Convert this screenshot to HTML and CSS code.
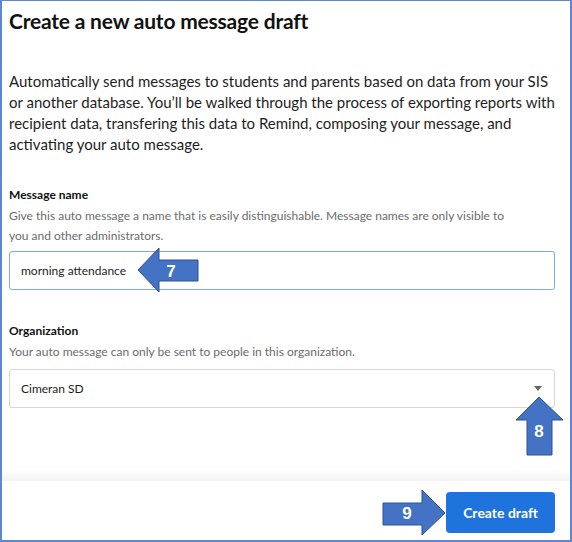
FILE: index.html
```html
<!DOCTYPE html>
<html>
<head>
<meta charset="utf-8">
<link rel="stylesheet" href="styles.css">
</head>
<body>
<div class="frame">
  <div class="content">
    <h1 class="title">Create a new auto message draft</h1>
    <p class="intro">Automatically send messages to students and parents based on data from your SIS or another database. You’ll be walked through the process of exporting reports with recipient data, transfering this data to Remind, composing your message, and activating your auto message.</p>
    <div class="field field-name">
      <div class="label">Message name</div>
      <div class="help">Give this auto message a name that is easily distinguishable. Message names are only visible to you and other administrators.</div>
      <div class="input focused">morning attendance</div>
    </div>
    <div class="field field-org">
      <div class="label">Organization</div>
      <div class="help">Your auto message can only be sent to people in this organization.</div>
      <div class="input select">
        <span>Cimeran SD</span>
        <span class="caret"></span>
      </div>
    </div>
  </div>
  <div class="footer-shadow"></div>
  <div class="footer">
    <button class="btn-primary">Create draft</button>
  </div>
  <svg class="annotations" width="572" height="542" viewBox="0 0 572 542">
    <polygon points="138,270 159,248 159,260 198,260 198,281 159,281 159,292" class="arrow"/>
    <text x="171" y="277" class="num">7</text>
    <polygon points="539,397 563,420 552,420 552,455 527,455 527,420 516,420" class="arrow"/>
    <text x="539" y="437" class="num">8</text>
    <polygon points="383,503 422,503 422,490 445,513 422,535 422,525 383,525" class="arrow"/>
    <text x="407" y="519" class="num">9</text>
  </svg>
</div>
</body>
</html>
```
FILE: styles.css
```css
html, body {
  margin: 0;
  padding: 0;
  background: #ffffff;
}
.frame {
  position: relative;
  width: 572px;
  height: 542px;
  box-sizing: border-box;
  border: 2px solid #5b87d3;
  border-top-width: 1px;
  display: flex;
  flex-direction: column;
  font-family: Lato, "Noto Sans", sans-serif;
  color: #1e1e1e;
  overflow: hidden;
}
.content {
  flex: 1;
  padding: 6px 15px 0 7px;
}
.title {
  margin: 0;
  font-size: 21px;
  font-weight: 700;
  letter-spacing: -0.2px;
  line-height: 28px;
  color: #111;
}
.intro {
  margin: 36px 0 0 0;
  font-size: 15px;
  line-height: 21px;
  color: #1e1e1e;
}
.field-name {
  margin-top: 30px;
}
.field-org {
  margin-top: 31px;
}
.label {
  font-size: 12px;
  font-weight: 700;
  line-height: 20px;
  color: #111;
}
.help {
  margin-top: 1px;
  max-width: 500px;
  font-size: 12px;
  line-height: 20px;
  color: #6b6b6b;
}
.input {
  margin-top: 5px;
  height: 39px;
  box-sizing: border-box;
  border: 1px solid #d6d6d6;
  border-radius: 3px;
  padding: 0 11px;
  display: flex;
  align-items: center;
  font-size: 12px;
  color: #1e1e1e;
}
.input.focused {
  border-color: #7fa9e6;
}
.select {
  margin-top: 7px;
  justify-content: space-between;
  padding-right: 12px;
}
.caret {
  width: 0;
  height: 0;
  border-left: 4px solid transparent;
  border-right: 4px solid transparent;
  border-top: 5px solid #666;
}
.footer-shadow {
  height: 11px;
  background: linear-gradient(to bottom, rgba(240,240,240,0), #f3f3f3);
}
.footer {
  height: 59px;
  box-sizing: border-box;
  padding: 11px 15px 0 0;
  display: flex;
  justify-content: flex-end;
  align-items: flex-start;
}
.btn-primary {
  width: 109px;
  height: 41px;
  border: none;
  border-radius: 4px;
  background: #1f73dc;
  color: #ffffff;
  font-family: Lato, "Noto Sans", sans-serif;
  font-size: 14px;
  font-weight: 700;
}
.annotations {
  position: absolute;
  left: -2px;
  top: -1px;
  pointer-events: none;
}
.arrow {
  fill: #4472c4;
  stroke: #2f528f;
  stroke-width: 1;
}
.num {
  fill: #ffffff;
  font-family: "Liberation Sans", Arial, sans-serif;
  font-weight: 700;
  font-size: 17px;
  text-anchor: middle;
}
```
